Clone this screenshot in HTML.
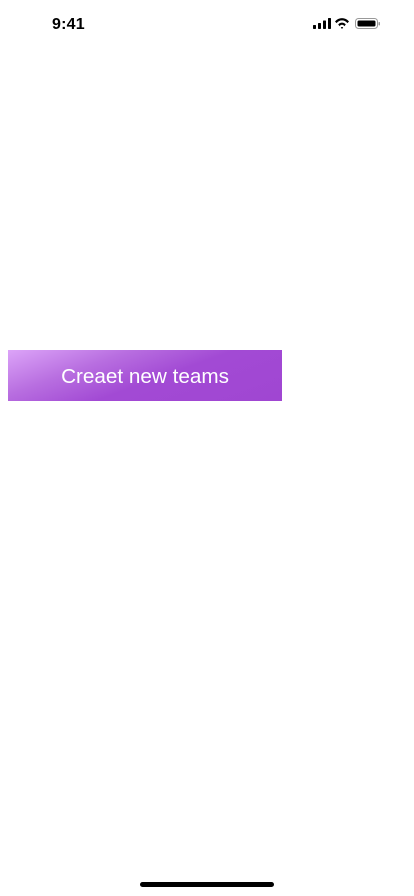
<!DOCTYPE html>
<html><head><meta charset="utf-8"><style>
html,body{margin:0;padding:0;background:#fff;width:414px;height:896px;overflow:hidden;position:relative;font-family:"Liberation Sans",sans-serif}
.time{position:absolute;left:52px;top:16px;font-size:16px;font-weight:bold;color:#000;letter-spacing:0.2px}
.btn{position:absolute;left:8px;top:350px;width:274px;height:51px;background:linear-gradient(160deg,#dca4f8 0%,#b86ee0 30%,#a24ad4 55%,#a046d2 100%);color:#fff;font-size:20.7px;display:flex;align-items:center;justify-content:center;padding-top:3px;box-sizing:border-box}
.home{position:absolute;left:140px;top:882px;width:134px;height:5px;border-radius:3px;background:#000}
</style></head><body>
<div class="time">9:41</div>
<svg style="position:absolute;left:313px;top:17px" width="68" height="14" viewBox="0 0 68 14">
<rect x="0" y="8" width="3" height="4" rx="0.7"/><rect x="5" y="6" width="3" height="6" rx="0.7"/><rect x="10" y="3.5" width="3" height="8.5" rx="0.7"/><rect x="15" y="1" width="3" height="11" rx="0.7"/>
<path d="M22 4.5 A9 9 0 0 1 36 4.5 L34.4 6.1 A6.8 6.8 0 0 0 23.6 6.1Z M25.2 7.6 A4.6 4.6 0 0 1 32.8 7.6 L31.2 9.2 A2.4 2.4 0 0 0 26.8 9.2Z M27.8 10.5 L29 12 L30.2 10.5 A1.6 1.6 0 0 0 27.8 10.5Z"/>
<rect x="42.5" y="1.5" width="22" height="10" rx="3" fill="none" stroke="#999" stroke-width="1"/>
<rect x="44.5" y="3.5" width="18" height="6" rx="1.5"/>
<rect x="65.5" y="5" width="1.5" height="3.5" rx="0.7" fill="#999"/>
</svg>
<div class="btn">Creaet new teams</div>
<div class="home"></div>
</body></html>
